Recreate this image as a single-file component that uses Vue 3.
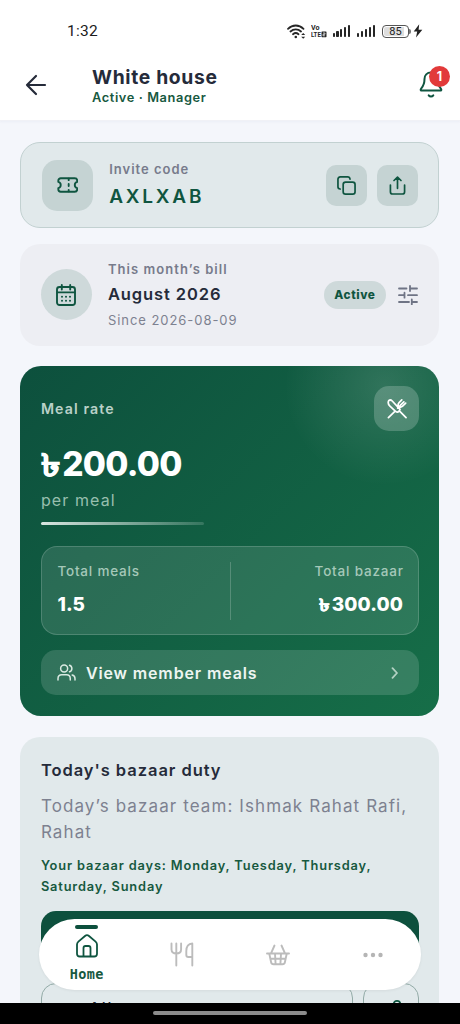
<script setup>
const signalBars = [4, 6, 8, 10, 12]
</script>

<template>
  <div class="screen">
    <header class="top">
      <div class="status">
        <span class="time">1:32</span>
        <div class="sys">
          <svg class="wifi" width="19" height="15" viewBox="0 0 19 15" fill="none" stroke="#262626" stroke-width="1.8" stroke-linecap="round">
            <path d="M1 4.8C5.5.4 12 .4 16.500 4.800M3.500 7.500c3-2.800 7.500-2.800 10.500 0M6 10.200c1.600-1.400 3.900-1.400 5.500 0" />
            <circle cx="8.800" cy="13" r="1.300" fill="#262626" stroke="none" />
            <path d="M14.200 11 16.200 9l2 2zM14.200 12.800l2 2 2-2z" fill="#262626" stroke="none" />
          </svg>
          <svg class="volte" width="16" height="14" viewBox="0 0 16 14" fill="#262626">
            <text x="0" y="6.300" textLength="8.500" lengthAdjust="spacingAndGlyphs">Vo</text>
            <text x="0" y="13.200" textLength="9.800" lengthAdjust="spacingAndGlyphs">LTE</text>
            <rect x="10.500" y="7.500" width="5" height="5.700" rx=".6" />
            <path d="M12 9h2v1.300h-2v1.500h2" fill="none" stroke="#fff" stroke-width=".7" />
          </svg>
          <div v-for="n in 2" :key="n" class="signal">
            <i v-for="h in signalBars" :key="h" :style="{ height: h + 'px' }"></i>
          </div>
          <div class="battery"><span>85</span></div>
          <svg class="bolt" width="10" height="14" viewBox="0 0 10 14"><path d="M6.200.300.700 7.600h3.500L3 13.600 9.300 5.800H5.600z" fill="#222" /></svg>
        </div>
      </div>
      <div class="bar">
        <svg class="back" width="22" height="22" viewBox="0 0 22 22" fill="none" stroke="#252b3a" stroke-width="2.200" stroke-linecap="round" stroke-linejoin="round">
          <path d="M20 11H2M11 2 2 11l9 9" />
        </svg>
        <div class="title">
          <h1>White house</h1>
          <p>Active · Manager</p>
        </div>
        <div class="bell">
          <svg width="24" height="27" viewBox="0 0 24 27" fill="none" stroke="#0f5540" stroke-width="2" stroke-linecap="round" stroke-linejoin="round">
            <path d="M12 1.500c-4 0-6.500 2.700-6.500 6.500 0 4.500-1.200 7-3.200 9.300-1.200 1.400-.700 2.300.9 2.300h17.600c1.600 0 2.100-.900.900-2.300-2-2.300-3.200-4.800-3.200-9.300 0-3.800-2.500-6.500-6.500-6.500" />
            <path d="M9.700 24.300c1.200 1.600 3.400 1.600 4.600 0" />
          </svg>
          <span>1</span>
        </div>
      </div>
    </header>

    <main>
      <section class="card invite">
        <div class="tile">
          <svg width="21.500" height="16" viewBox="0 0 23 17" fill="none" stroke="#0f5540" stroke-width="2" stroke-linecap="round" stroke-linejoin="round">
            <path d="M4 1.300h15a2.600 2.600 0 0 1 2.600 2.600v1.300a3.400 3.400 0 0 0 0 6.600v1.300a2.600 2.600 0 0 1-2.600 2.600H4a2.600 2.600 0 0 1-2.600-2.600v-1.300a3.400 3.400 0 0 0 0-6.600V3.900A2.600 2.600 0 0 1 4 1.300z" />
            <path d="M12.500 1.800v1.500M12.500 7.400v2.200M12.500 13.700v1.500" />
          </svg>
        </div>
        <div class="grow">
          <p class="lbl">Invite code</p>
          <p class="code">AXLXAB</p>
        </div>
        <button class="sq">
          <svg width="19" height="19" viewBox="0 0 20 20" fill="none" stroke="#0f5540" stroke-width="1.800" stroke-linecap="round" stroke-linejoin="round">
            <rect x="6.500" y="6.500" width="12.500" height="12.500" rx="2.500" />
            <path d="M3.300 13.700C1.800 13.500 1 12.700 1 11.200V3.500C1 1.900 1.900 1 3.500 1h7.700c1.500 0 2.300.8 2.500 2.300" />
          </svg>
        </button>
        <button class="sq">
          <svg width="17" height="19" viewBox="0 0 18 20" fill="none" stroke="#0f5540" stroke-width="1.800" stroke-linecap="round" stroke-linejoin="round">
            <path d="M1.500 9.500v7A2.500 2.500 0 0 0 4 19h10a2.500 2.500 0 0 0 2.500-2.500v-7M9 13V1.200M5.300 4.700 9 1.200l3.700 3.500" />
          </svg>
        </button>
      </section>

      <section class="card bill">
        <div class="tile round">
          <svg width="20" height="22" viewBox="0 0 20 22" fill="none" stroke="#0f5540" stroke-width="1.900" stroke-linecap="round" stroke-linejoin="round">
            <rect x="1" y="3" width="18" height="18" rx="2.500" />
            <path d="M1.500 8.400h17M5.800 1v4.500M14.200 1v4.500" />
            <path d="M6 12.800h.01M10 12.800h.01M14 12.800h.01M6 16.700h.01M10 16.700h.01M14 16.700h.01" stroke-width="2" />
          </svg>
        </div>
        <div class="grow">
          <p class="lbl wide">This month’s bill</p>
          <p class="month">August 2026</p>
          <p class="since">Since 2026-08-09</p>
        </div>
        <span class="pill">Active</span>
        <svg width="20" height="20" viewBox="0 0 20 20" fill="none" stroke="#6f7485" stroke-width="1.800" stroke-linecap="round">
          <path d="M1 3.500h7.500M12 3.500h7M12 1v5M1 10.200h4.500M6.500 7.700v5M10 10.200h9M1 17h10M13.800 14.500v5M14.500 17H19" />
        </svg>
      </section>

      <section class="card rate">
        <div class="glow"></div>
        <div class="rate-head">
          <p>Meal rate</p>
          <div class="cut">
            <svg width="20" height="20" viewBox="0 0 21 21" fill="none" stroke="#fff" stroke-width="1.800" stroke-linecap="round" stroke-linejoin="round">
              <path d="M1.800 1.800c1.300-1.200 2.700-.7 3.700.3l6.700 7.200 1.500 1.600-1 1.800c-1.300 1.400-2.900 1.200-4 .1L3.100 7.600C1.300 5.700.9 3.500 1.800 1.800zM8 13.200 1.500 19.500M13 12.500l7 7M15.500 1l-2.800 2.800c-1.300 1.300-1.300 2.900-.3 3.900s2.700 1.100 4-.2l3.200-3.200M17.700 3l-3.800 3.800M12.200 8.500l-1 1" />
            </svg>
          </div>
        </div>
        <p class="amount"><span class="taka">৳</span>200.00</p>
        <p class="per">per meal</p>
        <div class="rule"></div>
        <div class="stats">
          <div>
            <p class="sl">Total meals</p>
            <p class="sv">1.5</p>
          </div>
          <i></i>
          <div class="right">
            <p class="sl">Total bazaar</p>
            <p class="sv"><span class="taka">৳</span>300.00</p>
          </div>
        </div>
        <div class="view">
          <svg width="19" height="17" viewBox="0 0 20 18" fill="none" stroke="#d9e9e1" stroke-width="1.600" stroke-linecap="round" stroke-linejoin="round">
            <circle cx="7.500" cy="4.800" r="3.700" />
            <path d="M1 17v-1.500c0-2.400 1.700-4 4-4h5c2.300 0 4 1.600 4 4V17M13.200 1.300a3.700 3.700 0 0 1 0 7M16 11.700c1.800.5 3 1.900 3 3.800V17" />
          </svg>
          <span>View member meals</span>
          <svg width="8" height="12" viewBox="0 0 8 12" fill="none" stroke="#b3d1c3" stroke-width="1.800" stroke-linecap="round" stroke-linejoin="round"><path d="M1.500 1.200 6 6l-4.500 4.800" /></svg>
        </div>
      </section>

      <section class="card duty">
        <h2>Today's bazaar duty</h2>
        <p class="team">Today’s bazaar team: Ishmak Rahat Rafi,<br />Rahat</p>
        <p class="days">Your bazaar days: Monday, Tuesday, Thursday,<br />Saturday, Sunday</p>
        <div class="primary"></div>
        <div class="row">
          <div class="ghost">All</div>
          <div class="ghost small">
            <svg width="20" height="20" viewBox="0 0 20 20" fill="none" stroke="#0f5540" stroke-width="1.800"><circle cx="16" cy="6" r="3.200" /></svg>
          </div>
        </div>
      </section>
    </main>

    <nav>
      <div class="tab on">
        <b></b>
        <svg width="22" height="24" viewBox="0 0 22 24" fill="none" stroke="#0f5540" stroke-width="1.800" stroke-linejoin="round">
          <path d="M1 10.500c0-1.200.4-2 1.400-2.900L9 2c1.400-1.200 2.600-1.200 4 0l6.600 5.600c1 .9 1.400 1.700 1.400 2.900v9.200c0 1.900-.9 2.800-2.800 2.800H3.800C1.900 22.500 1 21.600 1 19.700z" />
          <path d="M7.500 22.300V14c0-1.400.7-2 2-2h3c1.300 0 2 .6 2 2v8.300" />
        </svg>
        <span>Home</span>
      </div>
      <div class="tab">
        <svg width="24" height="25" viewBox="0 0 24 25" fill="none" stroke="#bcbcbc" stroke-width="1.900" stroke-linecap="round" stroke-linejoin="round">
          <path d="M1.500 1.500v6c0 2.600 1.800 4 4.800 4s4.800-1.400 4.800-4v-6M6.300 1.500v22M22.300 23.500V1.500c-4 0-6 3.300-6 7.500v4c0 1.400.7 2 2 2h4" />
        </svg>
      </div>
      <div class="tab">
        <svg width="24" height="22" viewBox="0 0 24 22" fill="none" stroke="#bcbcbc" stroke-width="1.900" stroke-linecap="round" stroke-linejoin="round">
          <path d="M1 9.500h22M8.500 1.500 5 9.300M15.500 1.500 19 9.300M3.300 9.700l1.800 8.500c.3 1.400 1 2 2.400 2h9c1.400 0 2.100-.6 2.400-2l1.800-8.500M4.500 14.800h15M9 9.700l.6 10.300M15 9.700l-.6 10.300" />
        </svg>
      </div>
      <div class="tab">
        <svg width="20" height="6" viewBox="0 0 20 6" fill="#b5b5b5"><circle cx="2.500" cy="3" r="2.200" /><circle cx="10" cy="3" r="2.200" /><circle cx="17.500" cy="3" r="2.200" /></svg>
      </div>
    </nav>
    <div class="gesture"><i></i></div>
  </div>
</template>

<style>
body { margin: 0; background: #f4f6fb; }
</style>

<style scoped>
* { box-sizing: border-box; }
p, h1, h2 { margin: 0; white-space: nowrap; }
svg { display: block; flex: none; }
.screen { position: relative; width: 460px; height: 1024px; overflow: hidden; background: #f4f6fb; font-family: Inter, "Noto Sans", sans-serif; color: #252b3a; }
.top { height: 121px; background: #fff; border-bottom: 1px solid #f0f1f6; box-shadow: 0 1px 2px rgba(230, 232, 242, .6); }
.status { height: 48px; padding: 14px 37px 0 67px; display: flex; justify-content: space-between; }
.time { font: 400 15.500px/34px Roboto, sans-serif; color: #1c1c1c; letter-spacing: .3px; }
.sys { display: flex; align-items: center; height: 34px; }
.volte { margin-left: 5px; }
.volte text { font: 700 8px Roboto, sans-serif; }
.signal { display: flex; align-items: flex-end; gap: 1.700px; width: 19px; height: 12px; margin-left: 5.500px; }
.signal i { width: 2.200px; background: #262626; border-radius: .8px; }
.battery { position: relative; width: 27px; height: 13px; margin-left: 6px; border: 1px solid #555; border-radius: 4px; background: linear-gradient(90deg, #dedede 84%, #fff 84%); background-clip: content-box; padding: 1px; text-align: center; }
.battery span { display: block; font: 400 11px/10px Roboto, sans-serif; color: #222; }
.battery::after { content: ""; position: absolute; right: -3px; top: 3px; width: 2px; height: 5px; background: #777; border-radius: 0 2px 2px 0; }
.bolt { margin-left: 4px; }
.bar { display: flex; padding-left: 25px; align-items: flex-start; }
.back { margin-top: 26px; }
.title { margin-left: 45px; padding-top: 16.500px; }
.title h1 { font-size: 19.300px; font-weight: 700; line-height: 24px; letter-spacing: .67px; }
.title p { font-size: 12.800px; font-weight: 600; line-height: 17px; letter-spacing: .6px; color: #17593f; }
.bell { position: relative; margin-left: auto; margin-right: 17.500px; padding-top: 23px; }
.bell span { position: absolute; left: 10.500px; top: 17.500px; width: 21px; height: 21px; border-radius: 50%; background: #e23a3a; color: #fff; font-size: 12.500px; font-weight: 700; line-height: 21px; text-align: center; }

main { padding: 21.400px 20.600px 0 20.400px; display: flex; flex-direction: column; }
.card { border-radius: 20px; }
.grow { flex: 1; }
.invite { height: 86px; border: 1.500px solid #c2d1d1; background: #e1e9eb; display: flex; align-items: center; padding: 0 20.400px 0 20.400px; }
.tile { width: 51px; height: 51px; border-radius: 15px; background: #c5d3d3; display: grid; place-items: center; flex: none; }
.invite .grow { padding-left: 16.400px; }
.lbl { font-size: 13px; font-weight: 600; line-height: 24px; letter-spacing: 1px; color: #777b8b; }
.invite .lbl { margin-top: -2px; }
.wide { letter-spacing: 1.060px; }
.code { font-size: 19px; font-weight: 600; line-height: 31px; letter-spacing: 2.800px; color: #0f5540; }
.sq { width: 41px; height: 41px; border: 0; border-radius: 10px; background: #c5d3d3; display: grid; place-items: center; padding: 0; }
.sq + .sq { margin-left: 10px; }
.bill { height: 102px; margin-top: 15.500px; background: #edeef3; display: flex; align-items: center; padding: 0 21.500px 0 20.500px; }
.round { border-radius: 50%; background: #ced9da; }
.bill .grow { padding-left: 16px; margin-top: -1px; }
.month { font-size: 16.500px; font-weight: 600; line-height: 27px; letter-spacing: .9px; }
.since { font-size: 13px; line-height: 24px; letter-spacing: .95px; color: #7d8190; }
.pill { width: 62px; height: 28px; border-radius: 14px; background: #ced9da; color: #0f5540; font-size: 11.800px; font-weight: 800; line-height: 29px; text-align: center; letter-spacing: .6px; margin-right: 12px; }

.rate { position: relative; overflow: hidden; height: 350px; margin-top: 20.500px; border-radius: 21px; padding: 20px 20px 0 20.500px; color: #fff; background: linear-gradient(135deg, #0d503d 0%, #166e48 100%); }
.glow { position: absolute; right: -43px; top: -78px; width: 196px; height: 196px; border-radius: 50%; background: radial-gradient(circle, rgba(255, 255, 255, .13) 0%, rgba(255, 255, 255, 0) 72%); }
.rate > div:not(.glow) { position: relative; }
.rate-head { height: 45px; display: flex; justify-content: space-between; align-items: center; }
.rate-head p { font-size: 14.200px; font-weight: 600; letter-spacing: 1.100px; color: #b9d1c8; }
.cut { width: 45px; height: 45px; border-radius: 15px; background: rgba(255, 255, 255, .2); display: grid; place-items: center; }
.amount { margin-top: 13px; font-size: 33.500px; font-weight: 800; line-height: 40px; letter-spacing: -.75px; }
.taka { display: inline-block; margin-right: .13em; letter-spacing: 0; transform: scale(1.160, .92); transform-origin: 0 74%; -webkit-text-stroke: .024em #fff; }
.per { margin-top: 3.500px; font-size: 16px; line-height: 24px; letter-spacing: 1.100px; color: #97bfae; }
.rule { margin-top: 10px; width: 163px; height: 3.500px; border-radius: 2px; background: linear-gradient(90deg, #d9e6e1, rgba(255, 255, 255, .15)); }
.stats { margin-top: 20.500px; height: 89.500px; border: 1.300px solid rgba(255, 255, 255, .17); border-radius: 16px; background: rgba(255, 255, 255, .11); padding: 0 15.500px; display: flex; align-items: center; justify-content: space-between; }
.stats > i { width: 1px; height: 58px; background: rgba(255, 255, 255, .2); }
.stats > div { width: 150px; padding-bottom: 7px; }
.right { text-align: right; }
.sl { font-size: 13.500px; font-weight: 500; line-height: 28px; margin-bottom: 1px; letter-spacing: .8px; color: #a5c8b9; }
.right .sl { margin-right: -.8px; }
.sv { font-size: 19px; font-weight: 800; line-height: 38px; margin-bottom: -7px; letter-spacing: .1px; }
.sv .taka { margin-right: .17em; }
.view { margin-top: 15px; height: 45px; border-radius: 15px; background: rgba(255, 255, 255, .14); display: flex; align-items: center; padding: 0 20.500px 0 16px; }
.view span { flex: 1; margin-left: 10px; font-size: 16px; font-weight: 600; letter-spacing: .87px; color: #edf5f1; }

.duty { margin-top: 21px; height: 320px; padding: 20px 20.500px 0; background: #e1e9eb; }
.duty h2 { font-size: 16.500px; font-weight: 600; line-height: 27px; letter-spacing: .95px; }
.team { margin-top: 10px; font-size: 17px; line-height: 25.500px; letter-spacing: 1.100px; color: #7d8190; }
.days { margin-top: 11px; font-size: 12.800px; font-weight: 600; line-height: 20.500px; letter-spacing: .86px; color: #17593f; }
.primary { margin-top: 13.500px; height: 62px; border-radius: 15px; background: #0d503d; }
.row { display: flex; gap: 10px; margin-top: 10px; }
.ghost { flex: 1; height: 50px; border: 1.300px solid #93aba7; border-radius: 15px; font-size: 15.500px; font-weight: 500; line-height: 50px; padding-left: 47px; letter-spacing: 1.800px; }
.small { flex: none; width: 56px; padding: 14px 0 0 17px; }

nav { position: absolute; left: 39px; top: 919px; width: 382px; height: 71px; border-radius: 35.500px; background: #fff; box-shadow: 0 1px 3px rgba(0, 0, 0, .06); display: flex; }
.tab { flex: 1; display: grid; place-items: center; }
.tab.on { display: flex; flex-direction: column; align-items: center; padding-top: 6px; }
.tab b { width: 23px; height: 4px; border-radius: 2px; background: #0d503d; }
.tab.on svg { margin-top: 5px; }
.tab span { margin-top: 7px; font: 700 13.500px/18px "DejaVu Sans Mono", monospace; letter-spacing: .4px; color: #17593f; }
.gesture { position: absolute; left: 0; bottom: 0; width: 460px; height: 21px; background: #000; display: flex; justify-content: center; padding-top: 8px; }
.gesture i { width: 154px; height: 4px; border-radius: 2px; background: #8c8c8c; }
</style>
